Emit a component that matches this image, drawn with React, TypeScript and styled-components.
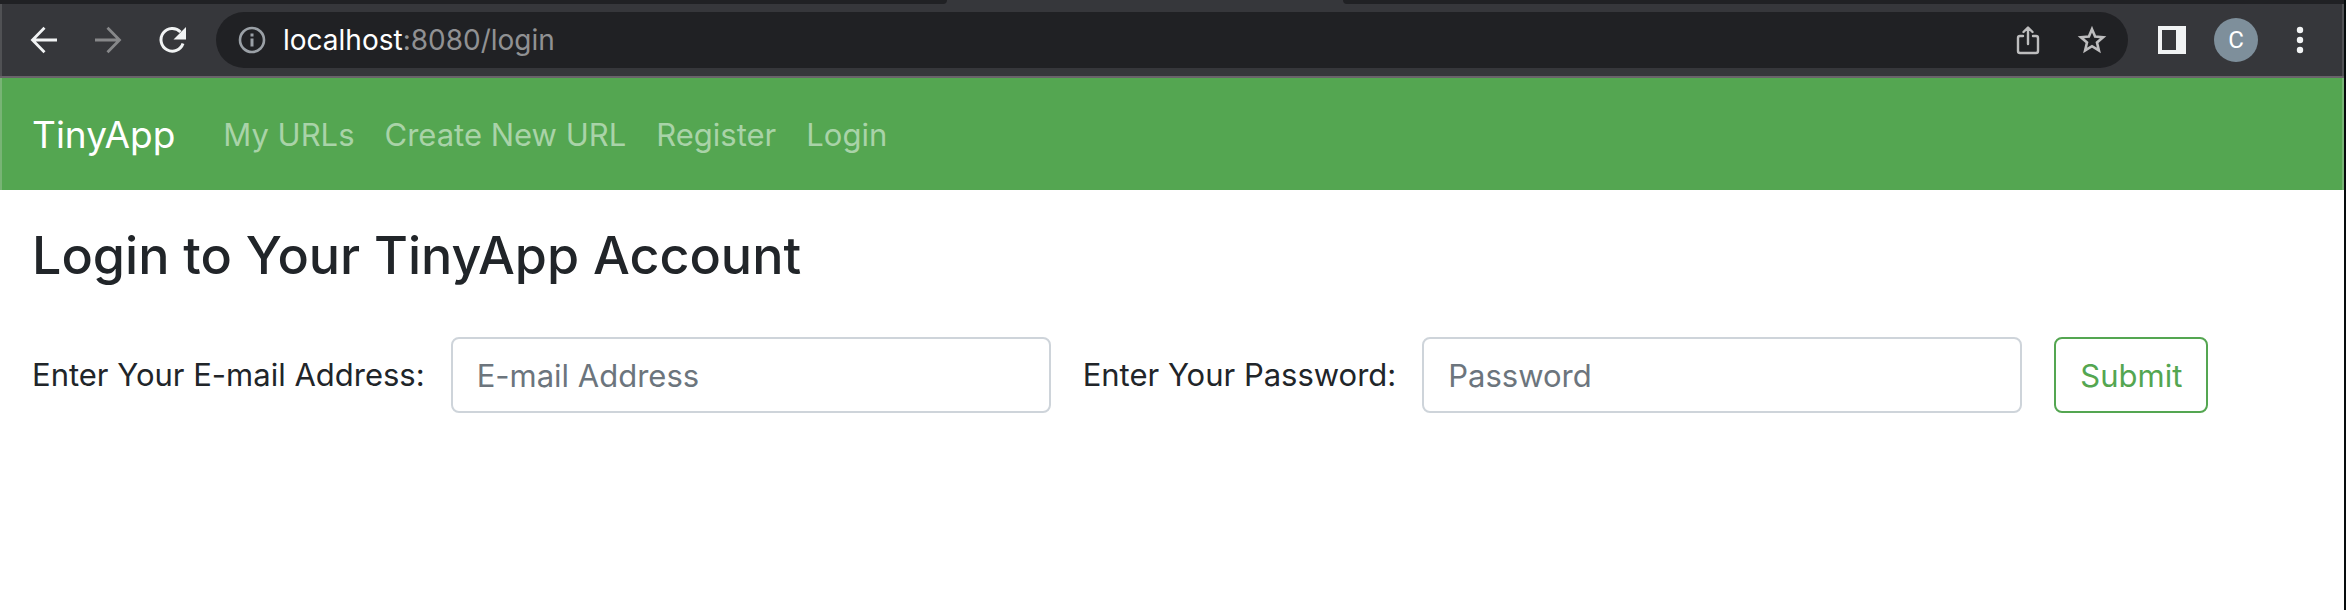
import React from "react";
import styled, { createGlobalStyle } from "styled-components";

const GlobalStyle = createGlobalStyle`
  *, *::before, *::after { box-sizing: border-box; }
  body {
    margin: 0;
    background: #ffffff;
    color: #212529;
    font-family: Inter, "Liberation Sans", sans-serif;
  }
`;

const Window = styled.div`
  min-height: 100vh;
  border-right: 2px solid #060c0d;
`;

const TabStrip = styled.div`
  display: grid;
  grid-template-columns: 947fr 396fr 1001fr;
  height: 4px;
  background: #36373b;
`;

const IdleTabs = styled.div<{ $side: "left" | "right" }>`
  background: #202124;
  border-radius: ${(p) => (p.$side === "left" ? "0 0 12px 0" : "0 0 0 12px")};
`;

const Toolbar = styled.header`
  display: flex;
  align-items: center;
  height: 74px;
  padding: 0 26px;
  background: #36373b;
  border-bottom: 2px solid #69636a;
  box-shadow: inset 2px 0 #505154, inset -2px 0 #505154;
`;

const IconButton = styled.button<{ $color?: string }>`
  display: flex;
  align-items: center;
  justify-content: center;
  flex: none;
  width: 36px;
  height: 36px;
  padding: 0;
  border: 0;
  background: none;
  color: ${(p) => p.$color ?? "#f1f3f4"};
`;

const NavButtons = styled.div`
  display: flex;
  gap: 28px;
`;

const AddressBar = styled.div`
  display: flex;
  align-items: center;
  flex: 1;
  min-width: 0;
  height: 56px;
  margin: 0 26px;
  padding: 0 18px;
  border-radius: 28px;
  background: #202124;
`;

const Address = styled.div`
  flex: 1;
  min-width: 0;
  overflow: hidden;
  padding-left: 13px;
  color: #909193;
  font-size: 28px;
  line-height: 36px;
  white-space: nowrap;
  outline: none;
`;

const Host = styled.span`
  color: #ffffff;
`;

const AddressActions = styled.div`
  display: flex;
  gap: 28px;
`;

const ToolbarActions = styled.div`
  display: flex;
  align-items: center;
  gap: 24px;
`;

const Avatar = styled.button`
  width: 44px;
  height: 44px;
  padding: 0;
  border: 0;
  border-radius: 50%;
  background: #7e8f9b;
  color: #ffffff;
  font-family: Roboto, sans-serif;
  font-size: 24px;
  line-height: 44px;
`;

const Navbar = styled.nav`
  display: flex;
  align-items: center;
  height: 112px;
  padding: 2px 32px 0;
  background: #54a651;
  box-shadow: inset 2px 0 #78b475, inset -2px 0 #78b475;
`;

const Brand = styled.a`
  margin-right: 48px;
  color: #ffffff;
  font-size: 37px;
  line-height: 60px;
  text-decoration: none;
`;

const NavLinks = styled.div`
  display: flex;
  gap: 30px;
`;

const NavLink = styled.a`
  color: #a9d3a8;
  font-size: 31px;
  line-height: 48px;
  text-decoration: none;
`;

const Main = styled.main`
  padding: 32px;
`;

const Title = styled.h1`
  margin: 0 0 48px;
  font-size: 52px;
  font-weight: 500;
  line-height: 67px;
`;

const LoginForm = styled.form`
  display: flex;
  flex-wrap: wrap;
  align-items: center;
  gap: 32px;
`;

const FieldGroup = styled.div`
  display: flex;
  align-items: center;
  gap: 26px;
`;

const Label = styled.label`
  font-size: 31px;
  line-height: 48px;
`;

const Field = styled.input`
  width: 600px;
  max-width: 100%;
  height: 76px;
  padding: 0 24px;
  border: 2px solid #ced4da;
  border-radius: 8px;
  background: #ffffff;
  color: #212529;
  font-family: inherit;
  font-size: 31px;

  &::placeholder {
    color: #6c757d;
    opacity: 1;
  }
`;

const SubmitButton = styled.button`
  height: 76px;
  padding: 0 24px;
  border: 2px solid #54a651;
  border-radius: 8px;
  background: #ffffff;
  color: #54a651;
  font-family: inherit;
  font-size: 31px;
`;

const svg = { width: 36, height: 36, viewBox: "0 0 36 36", fill: "none", stroke: "currentColor", "aria-hidden": true } as const;

const BackIcon = () => (
  <svg {...svg} strokeWidth="2.8">
    <path d="M31 18H7M18.5 5.8 6.5 18l12 12.2" />
  </svg>
);

const ForwardIcon = () => (
  <svg {...svg} strokeWidth="2.8">
    <path d="M5 18h24M17.5 5.8l12 12.2-12 12.2" />
  </svg>
);

const ReloadIcon = () => (
  <svg {...svg} strokeWidth="3">
    <path d="M29 21.5A11.3 11.3 0 1 1 26.5 10" />
    <path d="M32 5v12.5H19.5z" fill="currentColor" stroke="none" />
  </svg>
);

const InfoIcon = () => (
  <svg {...svg} strokeWidth="2.6">
    <circle cx="18" cy="18" r="12" />
    <path d="M18 16.5V24.5M18 11.5v3" strokeWidth="3" />
  </svg>
);

const ShareIcon = () => (
  <svg {...svg} strokeWidth="2.4" strokeLinecap="round" strokeLinejoin="round">
    <path d="M13 14h-3a2 2 0 0 0-2 2v13a2 2 0 0 0 2 2h16a2 2 0 0 0 2-2V16a2 2 0 0 0-2-2h-3M18 22V6M13.5 10 18 5.5l4.5 4.5" />
  </svg>
);

const StarIcon = () => (
  <svg {...svg} strokeWidth="2.6">
    <path d="m18 7.2 3.1 7.4 8 .7-6.1 5.2 1.9 7.9-6.9-4.2-6.9 4.2 1.9-7.9-6.1-5.2 8-.7z" />
  </svg>
);

const SidePanelIcon = () => (
  <svg {...svg} stroke="none">
    <path d="M4 4h28v28H4zM8 8v20h14V8z" fill="currentColor" fillRule="evenodd" />
  </svg>
);

const MenuIcon = () => (
  <svg {...svg} stroke="none">
    <g fill="currentColor">
      <circle cx="18" cy="8" r="3.2" />
      <circle cx="18" cy="18" r="3.2" />
      <circle cx="18" cy="28" r="3.2" />
    </g>
  </svg>
);

export default function App() {
  return (
    <Window>
      <GlobalStyle />
      <TabStrip>
        <IdleTabs $side="left" />
        <div />
        <IdleTabs $side="right" />
      </TabStrip>
      <Toolbar>
        <NavButtons>
          <IconButton aria-label="Back"><BackIcon /></IconButton>
          <IconButton aria-label="Forward" $color="#87888a"><ForwardIcon /></IconButton>
          <IconButton aria-label="Reload"><ReloadIcon /></IconButton>
        </NavButtons>
        <AddressBar>
          <IconButton aria-label="Site information" $color="#9aa0a6"><InfoIcon /></IconButton>
          <Address role="textbox" tabIndex={0} aria-label="Address">
            <Host>localhost</Host>:8080/login
          </Address>
          <AddressActions>
            <IconButton aria-label="Share" $color="#bdbdbe"><ShareIcon /></IconButton>
            <IconButton aria-label="Bookmark" $color="#bdbdbe"><StarIcon /></IconButton>
          </AddressActions>
        </AddressBar>
        <ToolbarActions>
          <IconButton aria-label="Side panel"><SidePanelIcon /></IconButton>
          <Avatar aria-label="Profile C">C</Avatar>
          <IconButton aria-label="Menu"><MenuIcon /></IconButton>
        </ToolbarActions>
      </Toolbar>
      <Navbar>
        <Brand href="#">TinyApp</Brand>
        <NavLinks>
          <NavLink href="#urls">My URLs</NavLink>
          <NavLink href="#new">Create New URL</NavLink>
          <NavLink href="#register">Register</NavLink>
          <NavLink href="#login">Login</NavLink>
        </NavLinks>
      </Navbar>
      <Main>
        <Title>Login to Your TinyApp Account</Title>
        <LoginForm onSubmit={(e) => e.preventDefault()}>
          <FieldGroup>
            <Label htmlFor="email">Enter Your E-mail Address:</Label>
            <Field id="email" type="email" placeholder="E-mail Address" />
          </FieldGroup>
          <FieldGroup>
            <Label htmlFor="password">Enter Your Password:</Label>
            <Field id="password" type="password" placeholder="Password" />
          </FieldGroup>
          <SubmitButton type="submit">Submit</SubmitButton>
        </LoginForm>
      </Main>
    </Window>
  );
}
